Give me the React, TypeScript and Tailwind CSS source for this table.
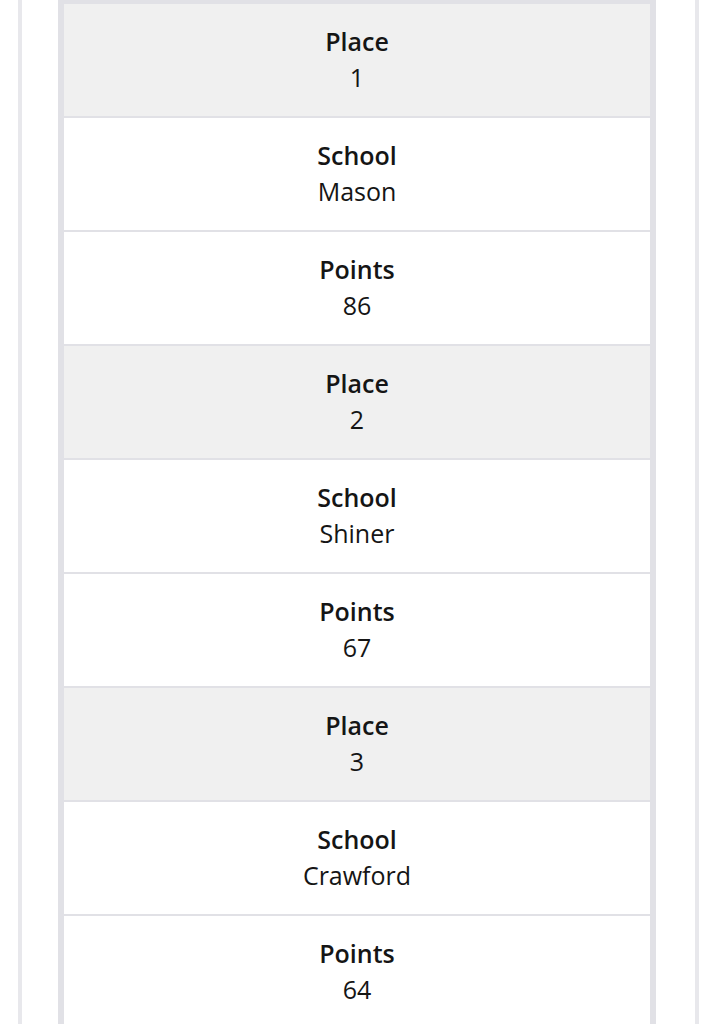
const rows = [
  { place: '1', school: 'Mason', points: '86' },
  { place: '2', school: 'Shiner', points: '67' },
  { place: '3', school: 'Crawford', points: '64' },
]

function Cell({ label, value, shaded }: { label: string; value: string; shaded?: boolean }) {
  return (
    <div
      className={`flex h-[112px] flex-col items-center justify-center pb-[2px] text-[25px] leading-[36px] text-[#151515] ${
        shaded ? 'bg-[#f0f0f0]' : 'bg-white'
      }`}
    >
      <p className="font-semibold">{label}</p>
      <p>{value}</p>
    </div>
  )
}

export default function App() {
  return (
    <div
      className="h-[1024px] w-[717px] overflow-hidden bg-white px-[18px]"
      style={{ fontFamily: '"Open Sans", "Noto Sans", sans-serif' }}
    >
      <div className="h-full border-x-4 border-[#e8e8ec] pl-[36px]">
        <div className="flex w-[598px] flex-col gap-[2px] border-x-[6px] border-t-4 border-[#e1e1e6] bg-[#e1e1e6]">
          {rows.map((r) => (
            <div key={r.place} className="flex flex-col gap-[2px]">
              <Cell label="Place" value={r.place} shaded />
              <Cell label="School" value={r.school} />
              <Cell label="Points" value={r.points} />
            </div>
          ))}
        </div>
      </div>
    </div>
  )
}
